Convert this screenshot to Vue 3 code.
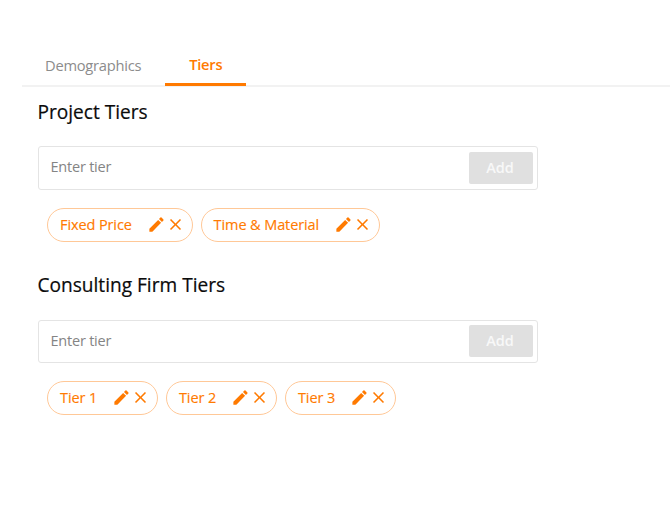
<script setup>
import { reactive, ref } from 'vue'

const tabs = ['Demographics', 'Tiers']
const activeTab = ref('Tiers')

const sections = reactive([
  { id: 'project', title: 'Project Tiers', draft: '', tiers: ['Fixed Price', 'Time & Material'] },
  { id: 'firm', title: 'Consulting Firm Tiers', draft: '', tiers: ['Tier 1', 'Tier 2', 'Tier 3'] }
])

function addTier(section) {
  const name = section.draft.trim()
  if (!name) return
  section.tiers.push(name)
  section.draft = ''
}

function editTier(section, index) {
  section.draft = section.tiers[index]
  section.tiers.splice(index, 1)
}

function removeTier(section, index) {
  section.tiers.splice(index, 1)
}
</script>

<template>
  <div class="page">
    <nav class="tabs">
      <button
        v-for="tab in tabs"
        :key="tab"
        type="button"
        :class="{ 'tab': true, 'tab-active': tab === activeTab }"
        @click="activeTab = tab"
      >
        {{ tab }}
      </button>
    </nav>

    <main class="content">
      <section v-for="section in sections" :key="section.id" class="tier-section">
        <h2 class="tier-title">{{ section.title }}</h2>
        <form class="tier-form" @submit.prevent="addTier(section)">
          <input v-model="section.draft" class="tier-input" type="text" placeholder="Enter tier" />
          <button class="tier-add" type="submit" :disabled="!section.draft.trim()">Add</button>
        </form>
        <ul class="chips">
          <li v-for="(tier, index) in section.tiers" :key="tier" class="chip">
            <span class="chip-label">{{ tier }}</span>
            <button class="chip-action" type="button" @click="editTier(section, index)">
              <svg class="chip-icon" viewBox="0 0 24 24">
                <path d="M3 17.25V21h3.75L17.81 9.94l-3.75-3.75L3 17.25zM20.71 7.04a1 1 0 0 0 0-1.41l-2.34-2.34a1 1 0 0 0-1.41 0l-1.83 1.83 3.75 3.75 1.83-1.83z" />
              </svg>
            </button>
            <button class="chip-action" type="button" @click="removeTier(section, index)">
              <svg class="chip-icon" viewBox="0 0 24 24">
                <path d="M19 6.41 17.59 5 12 10.59 6.41 5 5 6.41 10.59 12 5 17.59 6.41 19 12 13.41 17.59 19 19 17.59 13.41 12z" />
              </svg>
            </button>
          </li>
        </ul>
      </section>
    </main>
  </div>
</template>

<style>
body {
  background: #ffffff;
}
</style>

<style scoped>
.page {
  box-sizing: border-box;
  min-height: 517px;
  padding: 45px 0 0 22px;
  font-family: "Open Sans", "Noto Sans", sans-serif;
  color: #0b0b0b;
}

.page *,
.page *::before {
  box-sizing: border-box;
}

button,
input {
  font-family: inherit;
}

.tabs {
  display: flex;
  height: 42px;
  border-bottom: 2px solid #f2f2f2;
}

.tab {
  height: 41px;
  padding: 1px 24px 0 23px;
  border: 0;
  border-bottom: 3px solid transparent;
  background: none;
  font-size: 14.7px;
  letter-spacing: -0.25px;
  line-height: 38px;
  color: #8c8c8c;
  cursor: pointer;
}

.tab-active {
  padding-top: 0;
  padding-left: 24px;
  border-bottom-color: #ff7a00;
  letter-spacing: -0.25px;
  font-weight: 600;
  color: #ff7a00;
}

.content {
  padding: 12px 0 0 15.5px;
}

.tier-section {
  height: 173.4px;
}

.tier-title {
  margin: 0 0 20.3px;
  font-size: 19.1px;
  font-weight: 400;
  line-height: 27px;
  -webkit-text-stroke: 0.2px currentColor;
}

.tier-form {
  display: flex;
  align-items: center;
  width: 500px;
  height: 43.4px;
  padding: 0 4px 0 0;
  border: 1px solid #e4e4e4;
  border-radius: 3px;
}

.tier-input {
  flex: 1;
  min-width: 0;
  padding: 0 12px 2px;
  border: 0;
  outline: none;
  background: none;
  font-size: 14.5px;
  letter-spacing: -0.22px;
  color: #0b0b0b;
}

.tier-input::placeholder {
  color: #848484;
  opacity: 1;
}

.tier-add {
  width: 64px;
  height: 32px;
  padding: 0 1px 1px 0;
  border: 0;
  border-radius: 2px;
  background: #ff7a00;
  font-size: 14.5px;
  font-weight: 600;
  color: #ffffff;
}

.tier-add:disabled {
  background: #e0e0e0;
  color: #f8f8f8;
}

.chips {
  display: flex;
  gap: 8px;
  margin: 18.3px 0 0;
  padding: 0 0 0 9.5px;
  list-style: none;
}

.chip {
  display: flex;
  align-items: center;
  height: 33.6px;
  padding: 0 7px 0 12px;
  border: 1px solid #ffc897;
  border-radius: 17px;
  color: #ff7a00;
}

.chip-label {
  margin-right: 15.3px;
  font-size: 14.5px;
  letter-spacing: -0.1px;
  line-height: 20px;
  white-space: nowrap;
  -webkit-text-stroke: 0.15px currentColor;
}

.chip-action {
  display: flex;
  padding: 0 0 1px;
  border: 0;
  background: none;
  color: inherit;
  cursor: pointer;
}

.chip-action + .chip-action {
  margin-left: -0.5px;
}

.chip-icon {
  width: 19px;
  height: 19px;
  fill: currentColor;
}
</style>
